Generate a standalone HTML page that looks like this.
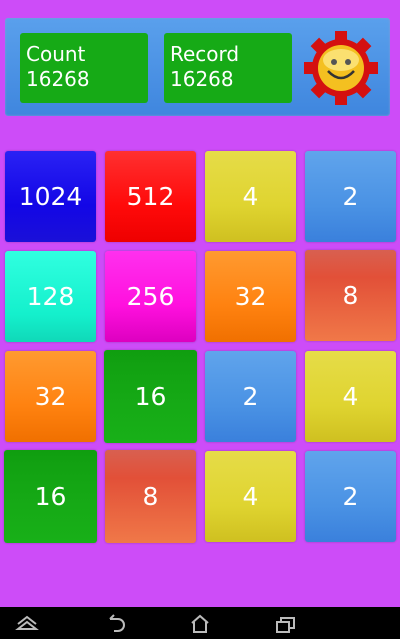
<!DOCTYPE html>
<html><head><style>
body{margin:0;width:400px;height:639px;background:#cd4cf8;position:relative;overflow:hidden;font-family:"DejaVu Sans","Liberation Sans",sans-serif;}
.p{position:absolute;}
.hdr{left:5px;top:18px;width:385px;height:98px;background:linear-gradient(#5aa0ec,#3f86de);border-radius:3px;box-shadow:0 0 2px #8a9ad8 inset;}
.g{top:33px;width:128px;height:70px;background:#16aa16;border-radius:3px;color:#fff;font-size:20px;line-height:25px;box-sizing:border-box;padding:9px 0 0 6px;}
.t{width:91px;height:91px;border-radius:3px;color:#fff;font-size:25px;display:flex;align-items:center;justify-content:center;box-shadow:0 0 2px rgba(0,0,0,.25);}
.b{background:linear-gradient(#2a22f4,#1306e6 60%,#1a10d8);}
.r{background:linear-gradient(#ff3030,#ff0a0a 60%,#ee0000);}
.y{background:linear-gradient(#e6dc48,#dfd430 60%,#cfc020);}
.lb{background:linear-gradient(#60a4ec,#4a92e4 60%,#3a80dc);}
.c{background:linear-gradient(#30ffe0,#14f0cc 70%,#10d8b8);}
.m{background:linear-gradient(#ff30ee,#ff10de 60%,#dd00c0);}
.o{background:linear-gradient(#ff9a30,#ff8210 60%,#f07000);}
.rd{background:linear-gradient(#d86050,#e25038 30%,#f07848);}
.gr{background:linear-gradient(#109e10,#16aa16 60%,#18b018);}
.nav{left:0;top:607px;width:400px;height:32px;background:#000;}
</style></head><body>
<div class="p hdr"></div>
<div class="p g" style="left:20px">Count<br>16268</div>
<div class="p g" style="left:164px">Record<br>16268</div>
<svg class="p" style="left:303px;top:30px" width="76" height="76" viewBox="0 0 76 76">
<g fill="#d41010" transform="translate(38,38)">
<rect x="-6" y="-37" width="12" height="74"/>
<rect x="-6" y="-37" width="12" height="74" transform="rotate(45)"/>
<rect x="-6" y="-37" width="12" height="74" transform="rotate(90)"/>
<rect x="-6" y="-37" width="12" height="74" transform="rotate(135)"/>
<circle r="29"/>
</g>
<circle cx="38" cy="38" r="23" fill="#f4c020"/>
<ellipse cx="38" cy="30" rx="18" ry="11" fill="#fbe070"/>
<circle cx="31" cy="32" r="3" fill="#555"/><circle cx="45" cy="32" r="3" fill="#555"/>
<path d="M25 41 Q38 55 51 41" stroke="#333" stroke-width="2.5" fill="none"/>
</svg>

<div class="p t b" style="left:5px;top:151px">1024</div>
<div class="p t r" style="left:105px;top:151px">512</div>
<div class="p t y" style="left:205px;top:151px">4</div>
<div class="p t lb" style="left:305px;top:151px">2</div>

<div class="p t c" style="left:5px;top:251px">128</div>
<div class="p t m" style="left:105px;top:251px">256</div>
<div class="p t o" style="left:205px;top:251px">32</div>
<div class="p t rd" style="left:305px;top:250px">8</div>

<div class="p t o" style="left:5px;top:351px">32</div>
<div class="p t gr" style="left:104px;top:350px;height:93px;width:93px">16</div>
<div class="p t lb" style="left:205px;top:351px">2</div>
<div class="p t y" style="left:305px;top:351px">4</div>

<div class="p t gr" style="left:4px;top:450px;width:93px;height:93px">16</div>
<div class="p t rd" style="left:105px;top:450px;height:93px">8</div>
<div class="p t y" style="left:205px;top:451px">4</div>
<div class="p t lb" style="left:305px;top:451px">2</div>

<div class="p nav"></div>
<svg class="p" style="left:0;top:607px" width="400" height="32" viewBox="0 0 400 32" fill="none" stroke="#bbb" stroke-width="2">
<path d="M18 17 L27 10 L36 17 M18 22 L27 15 L36 22 Z"/>
<path d="M110 12 H118 A5 5 0 0 1 118 24 H114 M110 12 L114 8"/>
<path d="M192 16 L200 9 L208 16 M194 15 V25 H206 V15"/>
<rect x="277" y="15" width="12" height="10"/><path d="M281 15 V11 H294 V21 H289"/>
</svg>
</body></html>
